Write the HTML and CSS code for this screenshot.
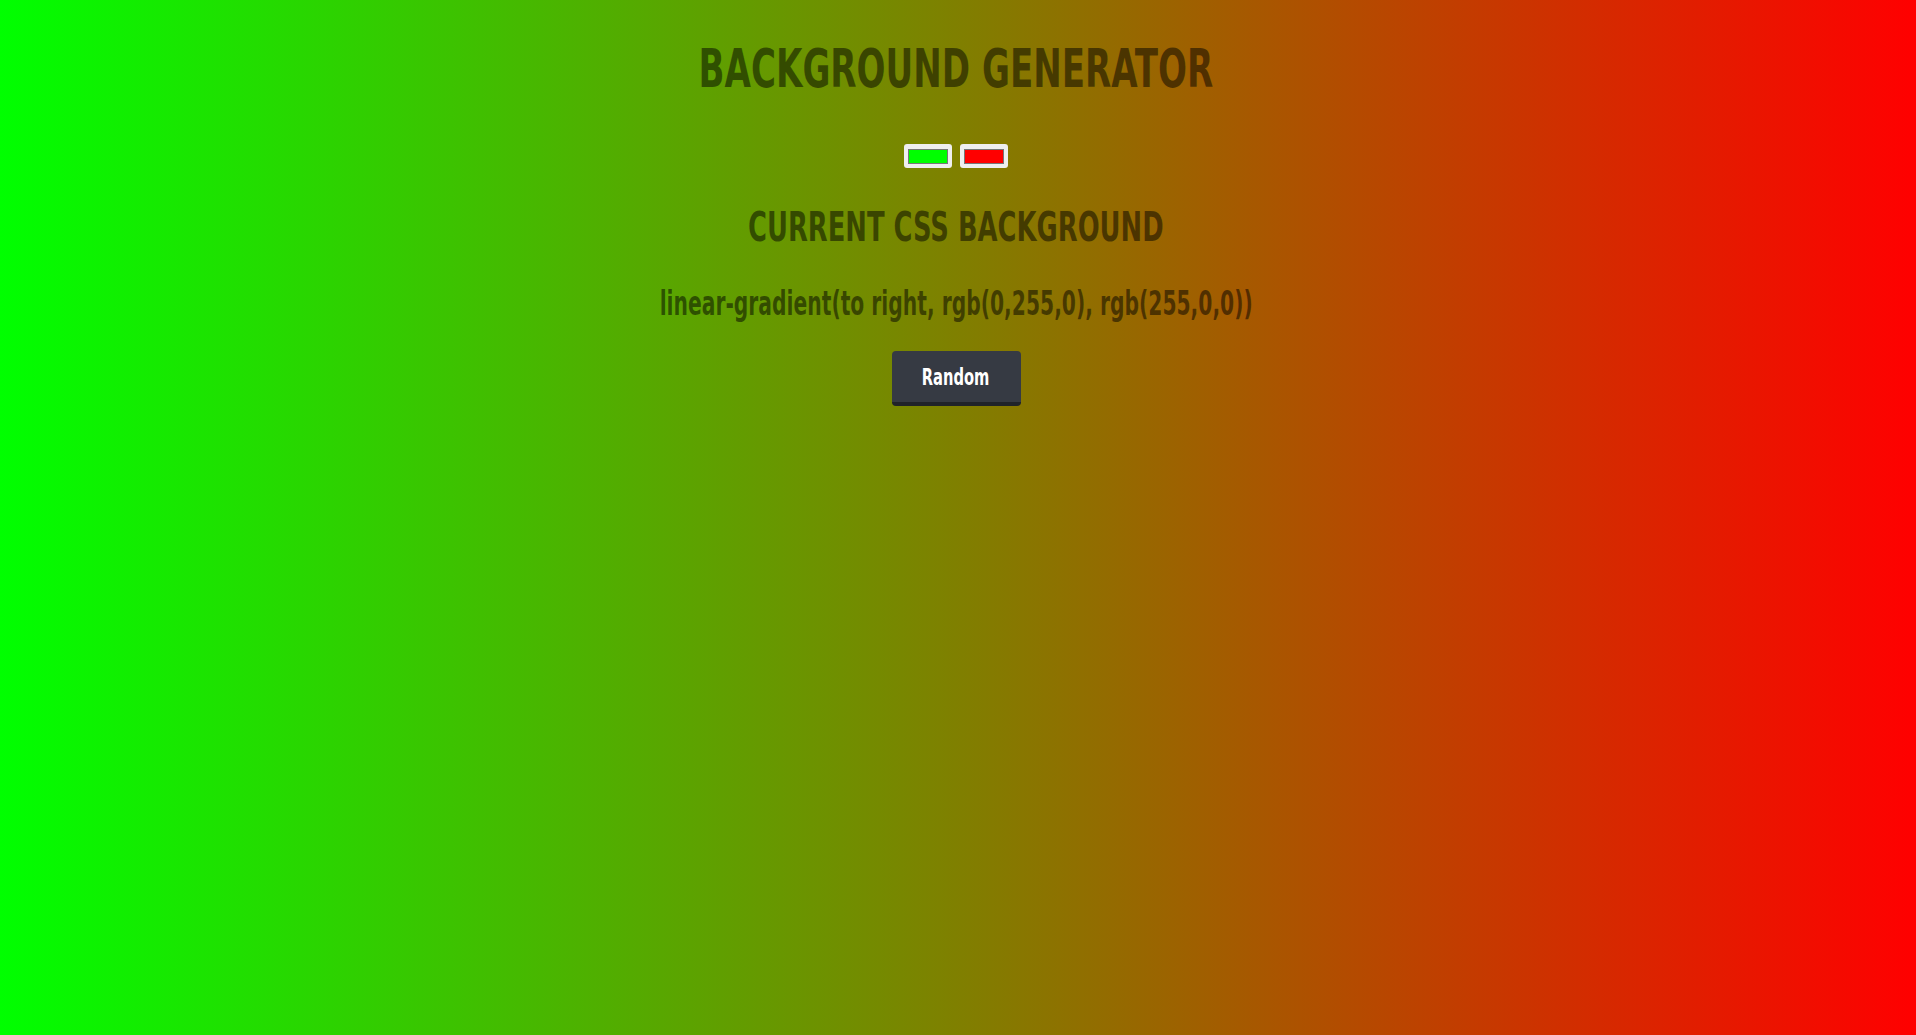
FILE: index.html
```html
<!DOCTYPE html>
<html lang="en">
<head>
<meta charset="utf-8">
<title>Background Generator</title>
<link rel="stylesheet" href="styles.css">
</head>
<body class="page">
  <h1 class="title"><span class="narrow narrow-title">BACKGROUND GENERATOR</span></h1>
  <div class="pickers">
    <span class="picker"><span class="swatch swatch-green"></span></span>
    <span class="picker"><span class="swatch swatch-red"></span></span>
  </div>
  <h2 class="subtitle"><span class="narrow narrow-sub">CURRENT CSS BACKGROUND</span></h2>
  <h3 class="css-value"><span class="narrow narrow-value">linear-gradient(to right, rgb(0,255,0), rgb(255,0,0))</span></h3>
  <div class="actions"><button class="random-btn"><span class="narrow narrow-btn">Random</span></button></div>
</body>
</html>
```
FILE: styles.css
```css
html, body {
  margin: 0;
  height: 100%;
}
.page {
  background: linear-gradient(to right, rgb(0,255,0), rgb(255,0,0));
  font-family: "DejaVu Sans Condensed", "DejaVu Sans", sans-serif;
  font-weight: bold;
  color: rgba(0,0,0,0.5);
  text-align: center;
  padding: 1px 4px 0 0;
  box-sizing: border-box;
}
.narrow {
  display: inline-block;
  white-space: nowrap;
  transform-origin: center;
}
.narrow-title { transform: scaleX(0.715); }
.narrow-sub { transform: scaleX(0.70); }
.narrow-value { transform: scaleX(0.683); }
.narrow-btn { transform: scaleX(0.71); }
.title {
  font-size: 53px;
  margin: 36px 0 0;
  line-height: 64px;
}
.pickers {
  display: flex;
  justify-content: center;
  gap: 8px;
  margin-top: 43px;
}
.picker {
  width: 48px;
  height: 24px;
  box-sizing: border-box;
  padding: 5px 4px 4px;
  background: #efefef;
  border-radius: 3px;
  display: flex;
}
.swatch {
  flex: 1;
  border: 1px solid #777;
}
.swatch-green { background: #00ff00; }
.swatch-red { background: #ff0000; }
.subtitle {
  font-size: 41px;
  margin: 34px 0 0;
  line-height: 50px;
}
.css-value {
  font-size: 33px;
  margin: 33px 0 0;
  line-height: 38px;
}
.actions {
  margin-top: 28px;
}
.random-btn {
  font-family: inherit;
  font-weight: bold;
  font-size: 23px;
  color: #fff;
  background: #363a43;
  border: none;
  border-bottom: 4px solid #202329;
  border-radius: 4px;
  width: 129px;
  height: 55px;
  padding: 0;
  cursor: pointer;
}
```
